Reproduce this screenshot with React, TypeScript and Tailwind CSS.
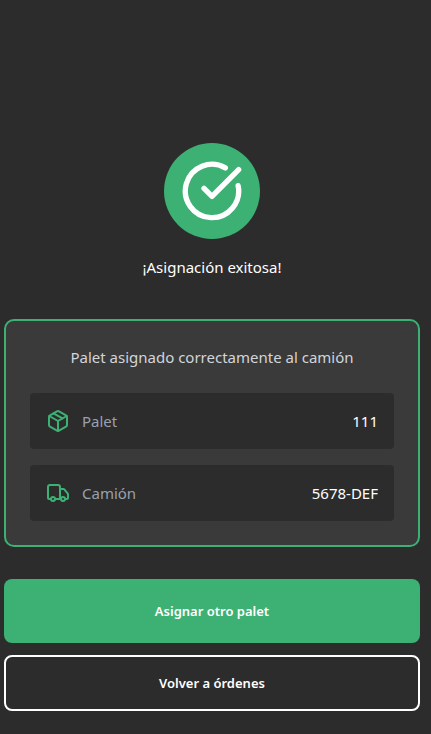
import type { ReactNode } from "react";
import { CircleCheckBig, Package, Truck } from "lucide-react";

type DetailProps = {
  icon: ReactNode;
  label: string;
  value: string;
};

function Detail({ icon, label, value }: DetailProps) {
  return (
    <div className="flex h-14 items-center justify-between rounded bg-[#2c2c2c] px-4">
      <dt className="flex items-center gap-3 text-[#99a1af]">
        {icon}
        {label}
      </dt>
      <dd className="text-white">{value}</dd>
    </div>
  );
}

export default function App() {
  return (
    <main className="min-h-screen bg-[#2c2c2c] pt-[143px] pr-[11px] pb-[23px] pl-1 font-['Noto_Sans',sans-serif] text-[15px] leading-6 text-white">
      <div className="flex flex-col items-center gap-4">
        <div className="flex size-24 items-center justify-center rounded-full bg-[#3db174]">
          <CircleCheckBig className="size-16" aria-hidden="true" />
        </div>
        <h1>¡Asignación exitosa!</h1>
      </div>

      <section className="mt-10 rounded-[10px] border-2 border-[#3db174] bg-[#3a3a3a] p-6">
        <p className="text-center text-[#d1d5dc]">Palet asignado correctamente al camión</p>
        <dl className="mt-6 flex flex-col gap-4">
          <Detail
            icon={<Package className="size-6 text-[#3db174]" aria-hidden="true" />}
            label="Palet"
            value="111"
          />
          <Detail
            icon={<Truck className="size-6 text-[#3db174]" aria-hidden="true" />}
            label="Camión"
            value="5678-DEF"
          />
        </dl>
      </section>

      <div className="mt-8 flex flex-col gap-3 text-[13px] font-semibold">
        <button type="button" className="h-16 w-full rounded-lg bg-[#3db174]">
          Asignar otro palet
        </button>
        <button type="button" className="h-14 w-full rounded-lg border-2 border-white">
          Volver a órdenes
        </button>
      </div>
    </main>
  );
}
